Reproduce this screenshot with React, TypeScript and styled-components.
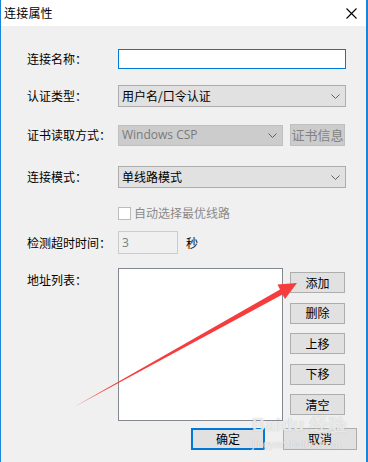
import styled, { createGlobalStyle } from 'styled-components'

const GlobalStyle = createGlobalStyle`
  html, body {
    margin: 0;
    padding: 0;
    background: #ffffff;
  }
  body {
    font-family: "Noto Sans CJK SC", "Noto Sans", sans-serif;
    font-size: 12px;
    line-height: 14px;
    color: #000000;
  }
`

const Window = styled.div`
  position: relative;
  width: 368px;
  height: 462px;
  box-sizing: border-box;
  border-left: 1px solid #1a84d8;
  border-right: 2px solid #1a84d8;
  background: #f0f0f0;
  display: flex;
  flex-direction: column;
  overflow: hidden;
`

const TitleBar = styled.div`
  height: 26px;
  flex-shrink: 0;
  background: #ffffff;
  display: flex;
  align-items: center;
  justify-content: space-between;
  padding: 0 9px 0 3px;
`

const Title = styled.span`
  font-size: 12px;
  line-height: 1;
  letter-spacing: 0.2px;
`

const Body = styled.div`
  display: flex;
  flex-direction: column;
  padding-left: 26px;
`

const Row = styled.div<{ $mt: number; $top?: boolean }>`
  display: flex;
  align-items: ${p => (p.$top ? 'flex-start' : 'center')};
  margin-top: ${p => p.$mt}px;
`

const Label = styled.div<{ $pt?: number }>`
  width: 91px;
  flex-shrink: 0;
  padding-top: ${p => p.$pt ?? 0}px;
`

const TextInput = styled.div<{ $w: number; $h: number; $disabled?: boolean }>`
  box-sizing: border-box;
  width: ${p => p.$w}px;
  height: ${p => p.$h}px;
  background: ${p => (p.$disabled ? '#f0f0f0' : '#ffffff')};
  border: 1px solid ${p => (p.$disabled ? '#cccccc' : '#0078d7')};
  padding-left: 3px;
  display: flex;
  align-items: center;
  font-family: "Open Sans", "Noto Sans", sans-serif;
  font-size: 12px;
  color: #7d7d7d;
`

const Select = styled.div<{ $w: number; $h: number; $disabled?: boolean }>`
  box-sizing: border-box;
  width: ${p => p.$w}px;
  height: ${p => p.$h}px;
  background: ${p => (p.$disabled ? '#cccccc' : '#e1e1e1')};
  border: 1px solid ${p => (p.$disabled ? '#bfbfbf' : '#adadad')};
  display: flex;
  align-items: center;
  justify-content: space-between;
  padding: 0 5px 0 3px;
  color: ${p => (p.$disabled ? '#7a7a7a' : '#000000')};
`

const LatinText = styled.span`
  font-family: "Open Sans", "Noto Sans", sans-serif;
  font-size: 12px;
`

const Button = styled.div<{ $w: number; $h: number; $ml?: number; $disabled?: boolean; $default?: boolean }>`
  box-sizing: border-box;
  width: ${p => p.$w}px;
  height: ${p => p.$h}px;
  margin-left: ${p => p.$ml ?? 0}px;
  flex-shrink: 0;
  background: ${p => (p.$disabled ? '#cccccc' : '#e1e1e1')};
  border: ${p =>
    p.$default ? '2px solid #0078d7' : `1px solid ${p.$disabled ? '#bfbfbf' : '#adadad'}`};
  color: ${p => (p.$disabled ? '#838383' : '#000000')};
  display: flex;
  align-items: center;
  justify-content: center;
  font-size: ${p => (p.$disabled ? '13px' : '12px')};
`

const CheckRow = styled.div`
  display: flex;
  align-items: center;
  margin-top: 18px;
  padding-left: 91px;
  color: #8a8a8a;
  font-size: 12px;
`

const CheckBox = styled.div`
  box-sizing: border-box;
  width: 13px;
  height: 13px;
  background: #ffffff;
  border: 1px solid #bcbcbc;
  margin-right: 3px;
`

const Unit = styled.span`
  margin-left: 8px;
`

const ListBox = styled.div`
  box-sizing: border-box;
  width: 165px;
  height: 153px;
  background: #ffffff;
  border: 1px solid #828790;
`

const SideButtons = styled.div`
  display: flex;
  flex-direction: column;
  gap: 9.5px;
  margin-left: 7px;
  margin-top: 4px;
`

const Footer = styled.div`
  display: flex;
  justify-content: flex-end;
  gap: 18px;
  margin-top: 7px;
  padding-right: 9px;
`

const Overlay = styled.svg`
  position: absolute;
  left: 0;
  top: 0;
  pointer-events: none;
`

const Watermark = styled.div`
  position: absolute;
  left: 251px;
  top: 414px;
  display: flex;
  flex-direction: column;
  pointer-events: none;
  color: rgba(255, 255, 255, 0.7);
  text-shadow: 0 0 1px rgba(160, 160, 160, 0.7);
`

const MarkBig = styled.span`
  font-family: "Liberation Sans", sans-serif;
  font-weight: bold;
  font-size: 18px;
  line-height: 22px;
  letter-spacing: 0.5px;
`

const MarkSmall = styled.span`
  font-family: "Liberation Sans", sans-serif;
  font-size: 11px;
  line-height: 13px;
  margin-top: 2px;
`

const Chevron = () => (
  <svg width="9" height="5" viewBox="0 0 9 5">
    <path d="M0.5 0.5 L4.5 4.5 L8.5 0.5" fill="none" stroke="#606060" strokeWidth="1" />
  </svg>
)

const CloseIcon = () => (
  <svg width="11" height="11" viewBox="0 0 11 11">
    <path d="M0.5 0.5 L10.5 10.5 M10.5 0.5 L0.5 10.5" stroke="#000" strokeWidth="1.1" />
  </svg>
)

const sideActions = ['添加', '删除', '上移', '下移', '清空']

export default function App() {
  return (
    <>
      <GlobalStyle />
      <Window>
        <TitleBar>
          <Title>连接属性</Title>
          <CloseIcon />
        </TitleBar>
        <Body>
          <Row $mt={23}>
            <Label>连接名称：</Label>
            <TextInput $w={228} $h={20} />
          </Row>
          <Row $mt={16}>
            <Label>认证类型：</Label>
            <Select $w={228} $h={22}>
              <span>用户名/口令认证</span>
              <Chevron />
            </Select>
          </Row>
          <Row $mt={17}>
            <Label>证书读取方式：</Label>
            <Select $w={165} $h={21} $disabled>
              <LatinText>Windows CSP</LatinText>
              <Chevron />
            </Select>
            <Button $w={55} $h={22} $ml={7} $disabled>
              证书信息
            </Button>
          </Row>
          <Row $mt={20}>
            <Label>连接模式：</Label>
            <Select $w={228} $h={22}>
              <span>单线路模式</span>
              <Chevron />
            </Select>
          </Row>
          <CheckRow>
            <CheckBox />
            <span>自动选择最优线路</span>
          </CheckRow>
          <Row $mt={11}>
            <Label>检测超时时间：</Label>
            <TextInput $w={60} $h={23} $disabled>
              3
            </TextInput>
            <Unit>秒</Unit>
          </Row>
          <Row $mt={14} $top>
            <Label $pt={5}>地址列表：</Label>
            <ListBox />
            <SideButtons>
              {sideActions.map(text => (
                <Button key={text} $w={55} $h={21}>
                  {text}
                </Button>
              ))}
            </SideButtons>
          </Row>
        </Body>
        <Footer>
          <Button $w={74} $h={22} $default>
            确定
          </Button>
          <Button $w={74} $h={22}>
            取消
          </Button>
        </Footer>
        <Watermark>
          <MarkBig>Baidu 经验</MarkBig>
          <MarkSmall>jingyan.baidu.com</MarkSmall>
        </Watermark>
        <Overlay width="368" height="462" viewBox="0 0 368 462">
          <polygon
            points="73,407 279,289.5 276.5,284.5 296,283 284,299 281.5,294.5"
            fill="#f53d3d"
          />
        </Overlay>
      </Window>
    </>
  )
}
